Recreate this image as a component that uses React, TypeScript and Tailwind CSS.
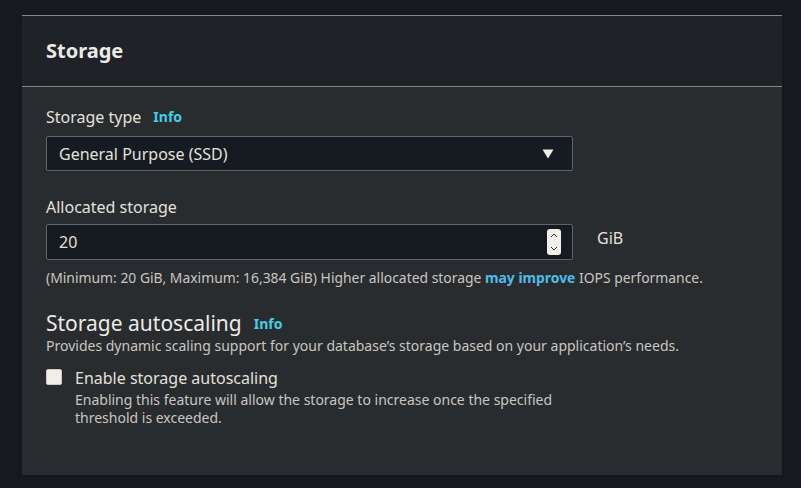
import { useState } from "react";

const font = { fontFamily: '"Noto Sans", "Open Sans", sans-serif' };

const InfoLink = () => (
  <span className="ml-[12px] text-[14px] font-bold text-[#42cfe8]">Info</span>
);

const App = () => {
  const [size, setSize] = useState("20");
  const [autoscale, setAutoscale] = useState(false);

  return (
    <div className="min-h-screen bg-[#16191f] pt-[15px] pl-[22px] pr-[19px] pb-[14px]" style={font}>
      <div className="bg-[#292c2e] shadow">
        {/* Header */}
        <div className="h-[72px] bg-[#1f2226] border-t border-b border-[#8a847e] px-6 flex items-center">
          <h2 className="text-[20px] font-bold text-[#eceae7]">Storage</h2>
        </div>

        {/* Body */}
        <div className="px-6 pt-[19px] pb-[48px]">
          {/* Storage type */}
          <div className="flex items-center text-[16px] text-[#e3e0dc] leading-[22px]">
            Storage type <InfoLink />
          </div>
          <div className="mt-[8px] w-[527px] h-[35px] bg-[#161b22] border border-[#5d636b] rounded-[2px] px-3 flex items-center justify-between">
            <span className="text-[16px] text-[#e3e0dc]">General Purpose (SSD)</span>
            <svg width="12" height="10" viewBox="0 0 12 10" className="mr-[6px]">
              <path d="M0.5 0.5h11L6 9.5z" fill="#f0ece6" />
            </svg>
          </div>

          {/* Allocated storage */}
          <div className="mt-[25px] text-[16px] text-[#e3e0dc] leading-[22px]">Allocated storage</div>
          <div className="mt-[6px] flex items-start gap-[24px]">
            <div className="w-[527px] h-[36px] bg-[#161b22] border border-[#5d636b] rounded-[2px] pl-3 pr-[11px] flex items-center justify-between">
              <input
                value={size}
                onChange={(e) => setSize(e.target.value)}
                className="bg-transparent outline-none text-[16px] text-[#e3e0dc] w-40"
              />
              <div className="flex flex-col items-center">
                <div className="w-[14px] h-[13px] bg-[#f2eee8] rounded-t-[3px] flex items-center justify-center">
                  <svg width="8" height="5" viewBox="0 0 8 5">
                    <path d="M1 4l3-3 3 3" stroke="#333" strokeWidth="1" fill="none" />
                  </svg>
                </div>
                <div className="w-[14px] h-[13px] bg-[#f2eee8] rounded-b-[3px] flex items-center justify-center">
                  <svg width="8" height="5" viewBox="0 0 8 5">
                    <path d="M1 1l3 3 3-3" stroke="#333" strokeWidth="1" fill="none" />
                  </svg>
                </div>
              </div>
            </div>
            <span className="text-[16px] text-[#e3e0dc] pt-[2px]">GiB</span>
          </div>
          <p className="mt-[8px] text-[13.9px] text-[#c9c5c0] leading-[20px]">
            (Minimum: 20 GiB, Maximum: 16,384 GiB) Higher allocated storage{" "}
            <span className="font-bold text-[#4cbdea]">may improve</span> IOPS performance.
          </p>

          {/* Autoscaling */}
          <div className="mt-[22px] flex items-center h-[26px]">
            <span className="text-[21px] text-[#eceae7] leading-[26px]">Storage autoscaling</span>
            <InfoLink />
          </div>
          <p className="text-[14px] text-[#c9c5c0] leading-[20px]">
            Provides dynamic scaling support for your database’s storage based on your application’s needs.
          </p>
          <label className="mt-[11px] flex items-start gap-[13px] cursor-pointer">
            <input
              type="checkbox"
              checked={autoscale}
              onChange={(e) => setAutoscale(e.target.checked)}
              className="sr-only"
            />
            <span className="mt-[2px] w-[16px] h-[16px] rounded-[2px] bg-[#f2ede6] border border-[#cfc9c1] shrink-0" />
            <span>
              <span className="block text-[16px] text-[#e3e0dc] leading-[23px]">Enable storage autoscaling</span>
              <span className="block mt-[1px] text-[14px] text-[#c9c5c0] leading-[18px] w-[490px]">
                Enabling this feature will allow the storage to increase once the specified threshold is exceeded.
              </span>
            </span>
          </label>
        </div>
      </div>
    </div>
  );
};

export default App;
